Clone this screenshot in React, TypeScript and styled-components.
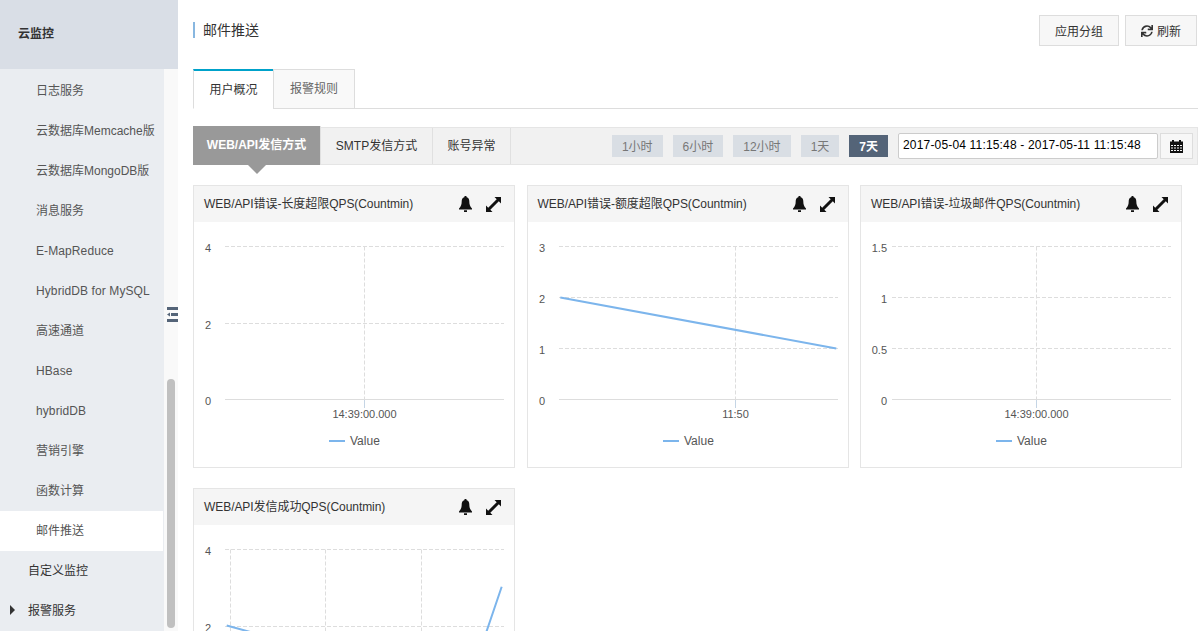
import styled, { createGlobalStyle } from 'styled-components';
import { FaSync } from 'react-icons/fa';

const GlobalStyle = createGlobalStyle`
  html, body {
    margin: 0;
    padding: 0;
    height: 631px;
    overflow: hidden;
    background: #fff;
    font-family: "Liberation Sans", "Noto Sans CJK SC", sans-serif;
    font-size: 12px;
    color: #333;
  }
`;

const Page = styled.div`
  display: flex;
  width: 1204px;
  height: 631px;
  overflow: hidden;
`;

const Aside = styled.aside`
  width: 178px;
  flex-shrink: 0;
  display: flex;
  flex-direction: column;
`;

const AsideTitle = styled.div`
  height: 69px;
  flex-shrink: 0;
  box-sizing: border-box;
  padding: 0 0 4px 18px;
  display: flex;
  align-items: center;
  background: #d9dee6;
  font-weight: bold;
  color: #333;
`;

const AsideBody = styled.div`
  flex: 1;
  display: flex;
  min-height: 0;
`;

const Menu = styled.ul`
  width: 164px;
  margin: 0;
  padding: 2px 0 0;
  list-style: none;
  background: #eaedf1;
`;

const MenuItem = styled.li<{ $active?: boolean; $top?: boolean; $latin?: boolean }>`
  position: relative;
  height: 40px;
  width: 163px;
  display: flex;
  align-items: center;
  box-sizing: border-box;
  padding-left: ${p => (p.$top ? '28px' : '36px')};
  padding-bottom: ${p => (p.$latin ? '0' : '4px')};
  letter-spacing: ${p => (p.$latin ? '0.1px' : '0')};
  color: ${p => (p.$top ? '#333' : '#555')};
  background: ${p => (p.$active ? '#fff' : 'transparent')};
`;

const Caret = styled.span`
  position: absolute;
  left: 10px;
  top: 14px;
  border-left: 5px solid #333;
  border-top: 5px solid transparent;
  border-bottom: 5px solid transparent;
`;

const Track = styled.div`
  position: relative;
  flex: 1;
  background: #f9f9f9;
`;

const Thumb = styled.div`
  position: absolute;
  left: 3px;
  top: 310px;
  width: 8px;
  height: 249px;
  border-radius: 4px;
  background: #c0c0c0;
`;

const Toggle = styled.svg`
  position: absolute;
  left: 3px;
  top: 238px;
`;

const Main = styled.main`
  flex: 1;
  min-width: 0;
  padding: 0 6px 0 15px;
`;

const Header = styled.div`
  height: 69px;
  display: flex;
  justify-content: space-between;
  align-items: flex-start;
`;

const Title = styled.h2`
  margin: 22px 0 0;
  padding-left: 8px;
  height: 16px;
  line-height: 16px;
  border-left: 2px solid #88b7e0;
  font-size: 14px;
  font-weight: normal;
  color: #333;
`;

const HeaderActions = styled.div`
  display: flex;
  gap: 6px;
  margin: 15px 1px 0 0;
`;

const ActionButton = styled.button`
  height: 31px;
  padding: 0 15px;
  display: flex;
  align-items: center;
  gap: 4px;
  box-sizing: border-box;
  border: 1px solid #ddd;
  background: #f7f7f7;
  color: #333;
  font: inherit;
`;

const Tabs = styled.div`
  display: flex;
  height: 40px;
  box-sizing: border-box;
  border-bottom: 1px solid #ddd;
`;

const Tab = styled.div<{ $active?: boolean }>`
  width: ${p => (p.$active ? '80px' : '82px')};
  height: 40px;
  box-sizing: border-box;
  padding-bottom: 3px;
  display: flex;
  align-items: center;
  justify-content: center;
  color: ${p => (p.$active ? '#333' : '#666')};
  background: ${p => (p.$active ? '#fff' : '#f9f9f9')};
  border-top: ${p => (p.$active ? '2px solid #00a2ca' : '1px solid #ddd')};
  border-left: 1px solid #ddd;
  border-right: ${p => (p.$active ? '0' : '1px solid #ddd')};
  border-bottom: ${p => (p.$active ? '1px solid #fff' : '1px solid #ddd')};
`;

const FilterBar = styled.div`
  margin-top: 18px;
  height: 38px;
  box-sizing: border-box;
  display: flex;
  align-items: center;
  background: #f1f1f1;
  border: 1px solid #e5e5e5;
  border-left: 0;
`;

const ModeTab = styled.div<{ $active?: boolean; $width: number }>`
  position: relative;
  width: ${p => p.$width}px;
  box-sizing: border-box;
  height: ${p => (p.$active ? '39px' : '36px')};
  margin-top: ${p => (p.$active ? '-2px' : '0')};
  padding-bottom: 3px;
  display: flex;
  align-items: center;
  justify-content: center;
  border-right: 1px solid #e0e0e0;
  color: ${p => (p.$active ? '#fff' : '#333')};
  background: ${p => (p.$active ? '#999' : 'transparent')};
  font-weight: ${p => (p.$active ? 'bold' : 'normal')};

  ${p =>
    p.$active &&
    `&::after {
      content: '';
      position: absolute;
      left: 50%;
      bottom: -9px;
      margin-left: -9px;
      border-top: 9px solid #999;
      border-left: 9px solid transparent;
      border-right: 9px solid transparent;
    }`}
`;

const Spacer = styled.div`
  flex: 1;
`;

const TimeButton = styled.div<{ $active?: boolean }>`
  height: 22px;
  box-sizing: border-box;
  padding: 0 10px 2px;
  margin-right: 10px;
  display: flex;
  align-items: center;
  color: ${p => (p.$active ? '#fff' : '#777')};
  background: ${p => (p.$active ? '#546478' : '#d9dee4')};
  font-weight: ${p => (p.$active ? 'bold' : 'normal')};
`;

const RangeInput = styled.div`
  width: 260px;
  height: 26px;
  box-sizing: border-box;
  padding: 0 0 2px 4px;
  display: flex;
  align-items: center;
  border: 1px solid #ccc;
  border-radius: 2px;
  background: #fff;
  color: #000;
  letter-spacing: 0.17px;
`;

const CalendarButton = styled.div`
  width: 33px;
  height: 26px;
  margin: 0 4px 0 2px;
  box-sizing: border-box;
  display: flex;
  align-items: center;
  justify-content: center;
  border: 1px solid #ddd;
  background: #f7f7f7;
`;

const CardGrid = styled.div`
  margin-top: 20px;
  display: grid;
  grid-template-columns: repeat(3, 322px);
  column-gap: 11.5px;
  row-gap: 20px;
`;

const Card = styled.section`
  height: 283px;
  box-sizing: border-box;
  border: 1px solid #e5e5e5;
  background: #fff;
`;

const CardHead = styled.div`
  height: 36px;
  box-sizing: border-box;
  padding: 0 13px 4px 10px;
  display: flex;
  align-items: center;
  background: #f5f5f5;
  color: #333;
  letter-spacing: -0.06px;
`;

const CardTitle = styled.div`
  flex: 1;
`;

const CardIcons = styled.div`
  display: flex;
  align-items: center;
  gap: 14px;
  margin-top: 4px;
`;

const AxisText = styled.text`
  font-size: 11px;
  fill: #555;
`;

const LegendText = styled.text`
  font-size: 12px;
  fill: #555;
`;

const BellIcon = () => (
  <svg width="13" height="16" viewBox="0 0 13 16">
    <path
      d="M6.5 0C7.3 0 7.7.5 7.7 1.2 9.6 1.8 10.3 3.3 10.3 5.2c0 3.2.7 5.2 2.7 7.3v.9H0v-.9c2-2.1 2.7-4.1 2.7-7.3 0-1.9.7-3.4 2.6-4C5.3.5 5.7 0 6.5 0zM5 14.3h3V16H5z"
      fill="#111"
    />
  </svg>
);

const ExpandIcon = () => (
  <svg width="15" height="15" viewBox="0 0 15 15">
    <path d="M8.5 0H15v6.500L12.800 4.300 4.300 12.800 6.500 15H0V8.500l2.200 2.200 8.500-8.500z" fill="#111" />
  </svg>
);

const CalendarIcon = () => (
  <svg width="13" height="13" viewBox="0 0 13 13">
    <path d="M2 0h2v2H2zM9 0h2v2H9zM0 1.500h13V13H0z" fill="#111" />
    <path
      d="M1 5h2v1H1zM4 5h2v1H4zM7 5h2v1H7zM10 5h2v1h-2zM1 7.500h2v1H1zM4 7.500h2v1H4zM7 7.500h2v1H7zM10 7.500h2v1h-2zM1 10h2v1H1zM4 10h2v1H4zM7 10h2v1H7zM10 10h2v1h-2z"
      fill="#f7f7f7"
    />
  </svg>
);

type ChartProps = {
  yLabels: string[];
  xLabel?: string;
  gridX: number[];
  labelEnd?: number;
  line?: string;
};

// plot runs from y=24.5 to y=177.5 inside the card body
const Chart = ({ yLabels, xLabel, gridX, labelEnd = 17, line }: ChartProps) => {
  const step = 153 / (yLabels.length - 1);
  return (
    <svg width="320" height="246" style={{ display: 'block' }}>
      {yLabels.map((label, i) => {
        const y = Math.floor(24.5 + step * i) + 0.5;
        const last = i === yLabels.length - 1;
        return (
          <g key={label}>
            <AxisText x={labelEnd} y={y + 5} textAnchor="end">
              {label}
            </AxisText>
            <line
              x1="31"
              x2="310"
              y1={y}
              y2={y}
              stroke="#ddd"
              strokeDasharray={last ? undefined : '4 2'}
            />
          </g>
        );
      })}
      {gridX.map(x => (
        <g key={x}>
          <line x1={x} x2={x} y1="24.500" y2="177.500" stroke="#ddd" strokeDasharray="4 2" />
          <line x1={x} x2={x} y1="178" y2="186" stroke="#c5d5e5" />
        </g>
      ))}
      {xLabel && (
        <AxisText x={gridX[gridX.length - 1]} y="196" textAnchor="middle">
          {xLabel}
        </AxisText>
      )}
      {line && <path d={line} fill="none" stroke="#7cb5ec" strokeWidth="2" />}
      <line x1="135" x2="151" y1="219" y2="219" stroke="#7cb5ec" strokeWidth="2" />
      <LegendText x="156" y="223">
        Value
      </LegendText>
    </svg>
  );
};

const subItems = [
  { label: '日志服务' },
  { label: '云数据库Memcache版' },
  { label: '云数据库MongoDB版' },
  { label: '消息服务' },
  { label: 'E-MapReduce', latin: true },
  { label: 'HybridDB for MySQL', latin: true },
  { label: '高速通道' },
  { label: 'HBase', latin: true },
  { label: 'hybridDB', latin: true },
  { label: '营销引擎' },
  { label: '函数计算' },
];

const times = ['1小时', '6小时', '12小时', '1天'];

const charts: (ChartProps & { title: string })[] = [
  {
    title: 'WEB/API错误-长度超限QPS(Countmin)',
    yLabels: ['4', '2', '0'],
    xLabel: '14:39:00.000',
    gridX: [170.5],
  },
  {
    title: 'WEB/API错误-额度超限QPS(Countmin)',
    yLabels: ['3', '2', '1', '0'],
    xLabel: '11:50',
    gridX: [207.5],
    line: 'M32.300 75.500 L308.300 126.500',
  },
  {
    title: 'WEB/API错误-垃圾邮件QPS(Countmin)',
    yLabels: ['1.5', '1', '0.5', '0'],
    xLabel: '14:39:00.000',
    gridX: [175.5],
    labelEnd: 26,
  },
  {
    title: 'WEB/API发信成功QPS(Countmin)',
    yLabels: ['4', '2', '0'],
    gridX: [36.5, 131.5, 227.5],
    line: 'M32.700 100.500 L60 108 L292 108 L307.700 61.700',
  },
];

export default function App() {
  return (
    <Page>
      <GlobalStyle />
      <Aside>
        <AsideTitle>云监控</AsideTitle>
        <AsideBody>
          <Menu>
            {subItems.map(item => (
              <MenuItem key={item.label} $latin={item.latin}>
                {item.label}
              </MenuItem>
            ))}
            <MenuItem $active>邮件推送</MenuItem>
            <MenuItem $top>自定义监控</MenuItem>
            <MenuItem $top>
              <Caret />
              报警服务
            </MenuItem>
          </Menu>
          <Track>
            <Toggle width="11" height="15" viewBox="0 0 11 15">
              <path d="M0 0h11v3H0zM4 6h7v3H4zM3 5.500v4L0 7.500zM0 12h11v3H0z" fill="#546478" />
            </Toggle>
            <Thumb />
          </Track>
        </AsideBody>
      </Aside>
      <Main>
        <Header>
          <Title>邮件推送</Title>
          <HeaderActions>
            <ActionButton>应用分组</ActionButton>
            <ActionButton>
              <FaSync size={12} />
              刷新
            </ActionButton>
          </HeaderActions>
        </Header>
        <Tabs>
          <Tab $active>用户概况</Tab>
          <Tab>报警规则</Tab>
        </Tabs>
        <FilterBar>
          <ModeTab $active $width={128}>
            WEB/API发信方式
          </ModeTab>
          <ModeTab $width={112}>SMTP发信方式</ModeTab>
          <ModeTab $width={78}>账号异常</ModeTab>
          <Spacer />
          {times.map(t => (
            <TimeButton key={t}>{t}</TimeButton>
          ))}
          <TimeButton $active>7天</TimeButton>
          <RangeInput>2017-05-04 11:15:48 - 2017-05-11 11:15:48</RangeInput>
          <CalendarButton>
            <CalendarIcon />
          </CalendarButton>
        </FilterBar>
        <CardGrid>
          {charts.map(({ title, ...chart }) => (
            <Card key={title}>
              <CardHead>
                <CardTitle>{title}</CardTitle>
                <CardIcons>
                  <BellIcon />
                  <ExpandIcon />
                </CardIcons>
              </CardHead>
              <Chart {...chart} />
            </Card>
          ))}
        </CardGrid>
      </Main>
    </Page>
  );
}
